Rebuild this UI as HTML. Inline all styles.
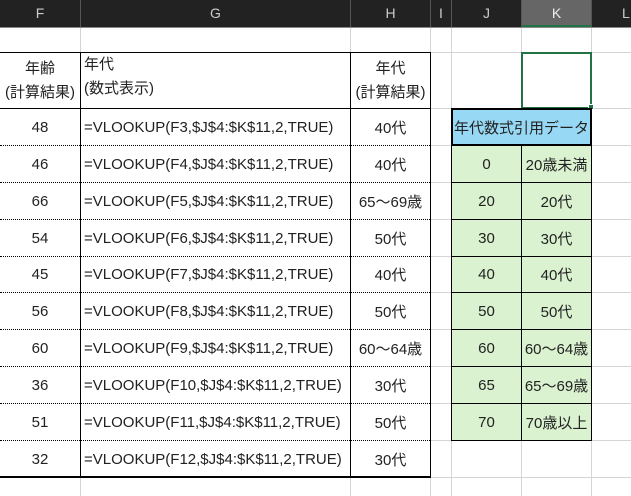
<!DOCTYPE html><html><head><meta charset="utf-8"><style>
*{margin:0;padding:0;box-sizing:border-box}
body{width:631px;height:496px;overflow:hidden;background:#fff;position:relative;font-family:"Liberation Sans","Noto Sans CJK JP",sans-serif;font-size:15px;color:#222}
.a{position:absolute}
.hd{top:0;height:27px;background:#222;color:#ccc;font-size:14px;text-align:center;line-height:27px}
.vl{position:absolute;width:1px;background:#d4d4d4}
.hl{position:absolute;height:1px;background:#d4d4d4;left:0;width:631px}
.c{position:absolute;display:flex;align-items:center;justify-content:center;white-space:nowrap}
.l{justify-content:flex-start;padding-left:3px}
</style></head><body>
<div class="a hd" style="left:0;width:631px"></div>
<div class="a hd" style="left:0;width:80px">F</div>
<div class="a hd" style="left:81px;width:269px">G</div>
<div class="a hd" style="left:351px;width:79px">H</div>
<div class="a hd" style="left:431px;width:20px">I</div>
<div class="a hd" style="left:452px;width:69px">J</div>
<div class="a hd" style="left:522px;width:69px;background:#666;color:#eee;border-bottom:2px solid #217346">K</div>
<div class="a hd" style="left:592px;width:39px;text-align:left;padding-left:30px">L</div>
<div class="a" style="left:80px;top:0;width:1px;height:27px;background:#555"></div>
<div class="a" style="left:350px;top:0;width:1px;height:27px;background:#555"></div>
<div class="a" style="left:430px;top:0;width:1px;height:27px;background:#555"></div>
<div class="a" style="left:451px;top:0;width:1px;height:27px;background:#555"></div>
<div class="a" style="left:521px;top:0;width:1px;height:27px;background:#555"></div>
<div class="a" style="left:591px;top:0;width:1px;height:27px;background:#555"></div>
<div class="a" style="left:0;top:27px;width:631px;height:1px;background:#888"></div>
<div class="vl" style="left:80px;top:28px;height:468px"></div>
<div class="vl" style="left:350px;top:28px;height:468px"></div>
<div class="vl" style="left:430px;top:28px;height:468px"></div>
<div class="vl" style="left:451px;top:28px;height:468px"></div>
<div class="vl" style="left:521px;top:28px;height:468px"></div>
<div class="vl" style="left:591px;top:28px;height:468px"></div>
<div class="hl" style="top:52px"></div><div class="hl" style="top:108px"></div>
<div class="hl" style="top:145px"></div><div class="hl" style="top:182px"></div>
<div class="hl" style="top:219px"></div><div class="hl" style="top:256px"></div>
<div class="hl" style="top:292px"></div><div class="hl" style="top:329px"></div>
<div class="hl" style="top:366px"></div><div class="hl" style="top:403px"></div>
<div class="hl" style="top:440px"></div><div class="hl" style="top:477px"></div>
<div class="a" style="left:0;top:52px;width:431px;height:426px;background:#fff;border-top:1px solid #000;border-bottom:2px solid #000;border-right:1px solid #000"></div>
<div class="a" style="left:80px;top:52px;width:1px;height:426px;background:#000"></div>
<div class="a" style="left:350px;top:52px;width:1px;height:426px;background:#000"></div>
<div class="a" style="left:0;top:108px;width:430px;height:1px;background:#000"></div>
<div class="c" style="left:0;top:53px;width:80px;height:55px;flex-direction:column;line-height:24px"><span>年齢</span><span>(計算結果)</span></div>
<div class="c l" style="left:81px;top:53px;width:269px;height:55px;flex-direction:column;align-items:flex-start;line-height:24px"><span>年代</span><span>(数式表示)</span></div>
<div class="c" style="left:351px;top:53px;width:79px;height:55px;flex-direction:column;line-height:24px"><span>年代</span><span>(計算結果)</span></div>
<div class="a" style="left:521px;top:52px;width:71px;height:57px;border:2px solid #217346"></div>
<div class="a" style="left:588px;top:104px;width:6px;height:6px;background:#217346;border:1px solid #fff"></div>
<div class="a" style="left:451px;top:145px;width:141px;height:296px;background:#daf2d0;border:1px solid #000;border-top:none"></div>
<div class="a" style="left:521px;top:145px;width:1px;height:296px;background:#000"></div>
<div class="c" style="left:451px;top:108px;width:141px;height:38px;background:#97d9f5;border:2px solid #000">年代数式引用データ</div>
<div id="rows"></div>
<script>
var F=[48,46,66,54,45,56,60,36,51,32],H=["40代","40代","65～69歳","50代","40代","50代","60～64歳","30代","50代","30代"];
var Y=[108,145,182,219,256,292,329,366,403,440,477],h="";
for(var i=0;i<10;i++){var t=Y[i]+1,ht=Y[i+1]-Y[i]-1;
if(i>0)h+='<div class="a" style="left:0;top:'+Y[i]+'px;width:430px;border-top:1px dotted #000"></div>';
h+='<div class="c" style="left:0;top:'+t+'px;width:80px;height:'+ht+'px">'+F[i]+'</div>';
h+='<div class="c l" style="left:81px;top:'+t+'px;width:269px;height:'+ht+'px">=VLOOKUP(F'+(i+3)+',$J$4:$K$11,2,TRUE)</div>';
h+='<div class="c" style="left:351px;top:'+t+'px;width:79px;height:'+ht+'px">'+H[i]+'</div>';}
var J=[0,20,30,40,50,60,65,70],K=["20歳未満","20代","30代","40代","50代","60～64歳","65～69歳","70歳以上"];
for(var i=0;i<8;i++){var t=Y[i+1]+1,ht=Y[i+2]-Y[i+1]-1;
if(i>0)h+='<div class="a" style="left:451px;top:'+Y[i+1]+'px;width:141px;height:1px;background:#000"></div>';
h+='<div class="c" style="left:452px;top:'+t+'px;width:69px;height:'+ht+'px">'+J[i]+'</div>';
h+='<div class="c" style="left:522px;top:'+t+'px;width:69px;height:'+ht+'px">'+K[i]+'</div>';}
document.getElementById("rows").outerHTML=h;
</script>
</body></html>
